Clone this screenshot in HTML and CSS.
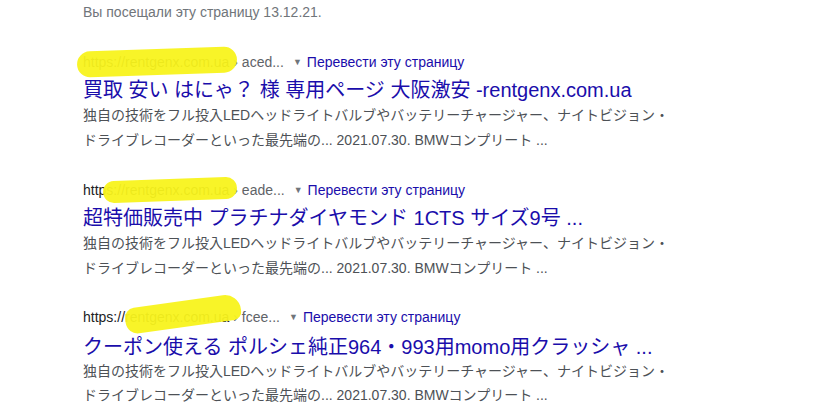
FILE: index.html
```html
<!DOCTYPE html>
<html lang="ru">
<head>
  <meta charset="UTF-8" />
  <meta name="viewport" content="width=device-width, initial-scale=1" />
  <title>Результаты поиска</title>
  <link rel="stylesheet" href="styles.css">
</head>
<body>

  <div class="visited">Вы посещали эту страницу 13.12.21.</div>

  <div class="result result-first">
    <div class="cite">
      <span class="url">https://rentgenx.com.ua<span class="marker marker-1"></span></span>
      <span class="path">› aced...</span>
      <span class="arrow">▼</span>
      <a class="translate" href="#">Перевести эту страницу</a>
    </div>
    <a class="title" href="#">買取 安い はにゃ？ 様 専用ページ 大阪激安 -rentgenx.com.ua</a>
    <div class="snippet">独自の技術をフル投入LEDヘッドライトバルブやバッテリーチャージャー、ナイトビジョン・<br>ドライブレコーダーといった最先端の... 2021.07.30. BMWコンプリート ...</div>
  </div>

  <div class="result">
    <div class="cite">
      <span class="url">https://rentgenx.com.ua<span class="marker marker-2"></span></span>
      <span class="path">› eade...</span>
      <span class="arrow">▼</span>
      <a class="translate" href="#">Перевести эту страницу</a>
    </div>
    <a class="title" href="#">超特価販売中 プラチナダイヤモンド 1CTS サイズ9号 ...</a>
    <div class="snippet">独自の技術をフル投入LEDヘッドライトバルブやバッテリーチャージャー、ナイトビジョン・<br>ドライブレコーダーといった最先端の... 2021.07.30. BMWコンプリート ...</div>
  </div>

  <div class="result result-last">
    <div class="cite">
      <span class="url">https://rentgenx.com.ua<span class="marker marker-3"></span></span>
      <span class="path">› fcee...</span>
      <span class="arrow">▼</span>
      <a class="translate" href="#">Перевести эту страницу</a>
    </div>
    <a class="title" href="#">クーポン使える ポルシェ純正964・993用momo用クラッシャ ...</a>
    <div class="snippet">独自の技術をフル投入LEDヘッドライトバルブやバッテリーチャージャー、ナイトビジョン・<br>ドライブレコーダーといった最先端の... 2021.07.30. BMWコンプリート ...</div>
  </div>

</body>
</html>
```

FILE: styles.css
```css
body {
  margin: 0;
  padding: 2px 0 0 83px;
  background: #fff;
  font-family: "Liberation Sans", Arial, "Noto Sans CJK JP", sans-serif;
  color: #4d5156;
  overflow: hidden;
}
.visited {
  font-size: 14px;
  line-height: 20px;
  color: #70757a;
}
.result {
  margin-top: 24px;
}
.result-first {
  margin-top: 27px;
}
.result-last {
  margin-top: 23px;
}
.cite {
  display: flex;
  align-items: center;
  gap: 5px;
  height: 25px;
  font-size: 14px;
  color: #202124;
  white-space: nowrap;
}
.url {
  position: relative;
}
.path {
  color: #5f6368;
  margin-left: -1px;
}
.arrow {
  font-size: 9px;
  color: #70757a;
  margin-left: 4px;
}
.translate {
  color: #1a0dab;
  text-decoration: none;
}
.title {
  display: block;
  margin-top: 1px;
  font-size: 20px;
  line-height: 30px;
  color: #1a0dab;
  text-decoration: none;
  white-space: nowrap;
}
.result-last .title {
  margin-top: 3px;
}
.snippet {
  margin-top: -2px;
  font-size: 14px;
  line-height: 25px;
  color: #4d5156;
}
.result-last .snippet {
  margin-top: -3px;
  line-height: 24px;
}

/* жёлтый маркер поверх домена */
.marker {
  position: absolute;
  background: rgba(248, 243, 28, 0.95);
  border-radius: 14px;
}
.marker-1 {
  left: -6px;
  top: -5px;
  width: 160px;
  height: 26px;
  transform: rotate(-2deg);
}
.marker-2 {
  left: 20px;
  top: -3px;
  width: 134px;
  height: 22px;
  transform: rotate(-2deg);
}
.marker-3 {
  left: 42px;
  top: -8px;
  width: 116px;
  height: 26px;
  transform: rotate(-8deg);
  border-radius: 10px 16px 8px 12px;
}
```
